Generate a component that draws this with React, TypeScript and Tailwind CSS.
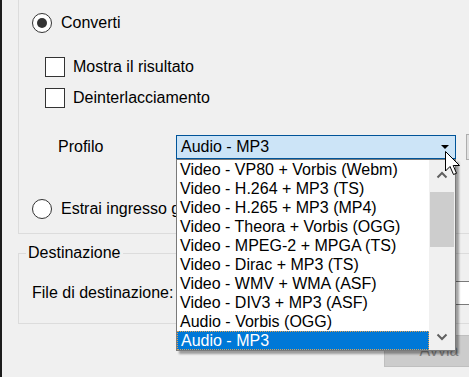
import React from "react";

const items = [
  "Video - VP80 + Vorbis (Webm)",
  "Video - H.264 + MP3 (TS)",
  "Video - H.265 + MP3 (MP4)",
  "Video - Theora + Vorbis (OGG)",
  "Video - MPEG-2 + MPGA (TS)",
  "Video - Dirac + MP3 (TS)",
  "Video - WMV + WMA (ASF)",
  "Video - DIV3 + MP3 (ASF)",
  "Audio - Vorbis (OGG)",
  "Audio - MP3",
];

function Chevron({ up }: { up?: boolean }) {
  return (
    <svg width="12" height="8" viewBox="0 0 12 8">
      <polyline
        points={up ? "1.5,6.5 6,2 10.5,6.5" : "1.5,1.5 6,6 10.5,1.5"}
        fill="none"
        stroke="#606060"
        strokeWidth="2"
      />
    </svg>
  );
}

export default function App() {
  return (
    <div
      className="relative flex w-[469px] h-[377px] overflow-hidden bg-[#f0f0f0] text-[16px] text-black"
      style={{ fontFamily: '"Liberation Sans", Arial, sans-serif' }}
    >
      <div className="w-[2px] h-full shrink-0 bg-[#1c1c1c]" />
      <div className="flex flex-col pl-[16px] shrink-0">
        {/* Group 1 */}
        <div className="flex flex-col w-[480px] h-[234px] border-l border-b border-[#dcdcdc]">
          <div className="flex items-center h-[20px] mt-[13px] ml-[13px]">
            <div className="flex items-center justify-center w-[20px] h-[20px] rounded-full border border-[#333] bg-white">
              <div className="w-[10px] h-[10px] rounded-full bg-[#333]" />
            </div>
            <span className="ml-[9px] leading-none">Converti</span>
          </div>
          <div className="flex items-center h-[20px] mt-[24px] ml-[26px]">
            <div className="w-[20px] h-[20px] border border-[#333] bg-white" />
            <span className="ml-[8px] leading-none">Mostra il risultato</span>
          </div>
          <div className="flex items-center h-[20px] mt-[11px] ml-[26px]">
            <div className="w-[20px] h-[20px] border border-[#333] bg-white" />
            <span className="ml-[8px] leading-none">Deinterlacciamento</span>
          </div>
          <div className="flex items-center h-[24px] mt-[27px] ml-[39px]">
            <span className="w-[118px] leading-none">Profilo</span>
            <div className="flex items-center justify-between w-[280px] h-[24px] border border-[#005499] bg-[#cce4f7] pl-[4px] pr-[6px]">
              <span className="leading-none">Audio - MP3</span>
              <svg width="8" height="5" viewBox="0 0 8 5">
                <polygon points="0,0 8,0 4,4" fill="#000" />
              </svg>
            </div>
            <div className="ml-[10px] w-[30px] h-[26px] border border-[#adadad] bg-[#e1e1e1]" />
          </div>
          <div className="flex items-center h-[20px] mt-[40px] ml-[13px]">
            <div className="w-[20px] h-[20px] rounded-full border border-[#333] bg-white" />
            <span className="ml-[9px] w-[115px] overflow-hidden leading-[20px] whitespace-nowrap">
              Estrai ingresso grezzo
            </span>
          </div>
        </div>

        {/* Group 2 */}
        <div className="relative flex flex-col w-[480px] h-[71px] mt-[19px] border-l border-t border-b border-[#dcdcdc]">
          <span className="absolute left-[7px] top-[-10px] px-[2px] bg-[#f0f0f0] leading-[18px]">
            Destinazione
          </span>
          <div className="flex items-center h-[24px] mt-[27px] ml-[13px]">
            <span className="w-[144px] leading-none whitespace-nowrap">File di destinazione:</span>
            <div className="w-[320px] h-[24px] border border-[#7a7a7a] bg-white" />
          </div>
        </div>

        <div className="flex items-center justify-center ml-[366px] mt-[11px] w-[110px] h-[32px] border border-[#bfbfbf] bg-[#cccccc] text-[#838383]">
          Avvia
        </div>
      </div>

      {/* Dropdown list */}
      <div className="absolute left-[176px] top-[159px] flex w-[280px] h-[192px] border border-[#7a7a7a] bg-white shadow-[3px_3px_2px_rgba(0,0,0,0.35)]">
        <div className="flex flex-col w-[252px]">
          {items.map((it, i) => (
            <div
              key={it}
              className={
                i === items.length - 1
                  ? "flex items-center h-[19px] pl-[3px] bg-[#0078d7] text-white border border-dotted border-[#e0a050] whitespace-nowrap"
                  : "flex items-center h-[19px] pl-[3px] whitespace-nowrap"
              }
            >
              <span className="leading-none">{it}</span>
            </div>
          ))}
        </div>
        <div className="flex flex-col items-center w-[26px] bg-[#f0f0f0]">
          <div className="flex items-center justify-center h-[30px]">
            <Chevron up />
          </div>
          <div className="w-[24px] h-[55px] mt-[2px] bg-[#cdcdcd]" />
          <div className="flex-1" />
          <div className="flex items-center justify-center h-[26px]">
            <Chevron />
          </div>
        </div>
      </div>

      {/* Mouse cursor */}
      <svg
        className="absolute left-[445px] top-[151px]"
        width="20"
        height="26"
        viewBox="0 0 20 26"
      >
        <path
          d="M0.5 0.5 L0.5 20 L5 15.5 L8.5 23.5 L11.5 22.3 L8.2 14.5 L14.5 14.5 Z"
          fill="#fff"
          stroke="#000"
          strokeWidth="1"
          strokeLinejoin="miter"
        />
      </svg>
    </div>
  );
}
